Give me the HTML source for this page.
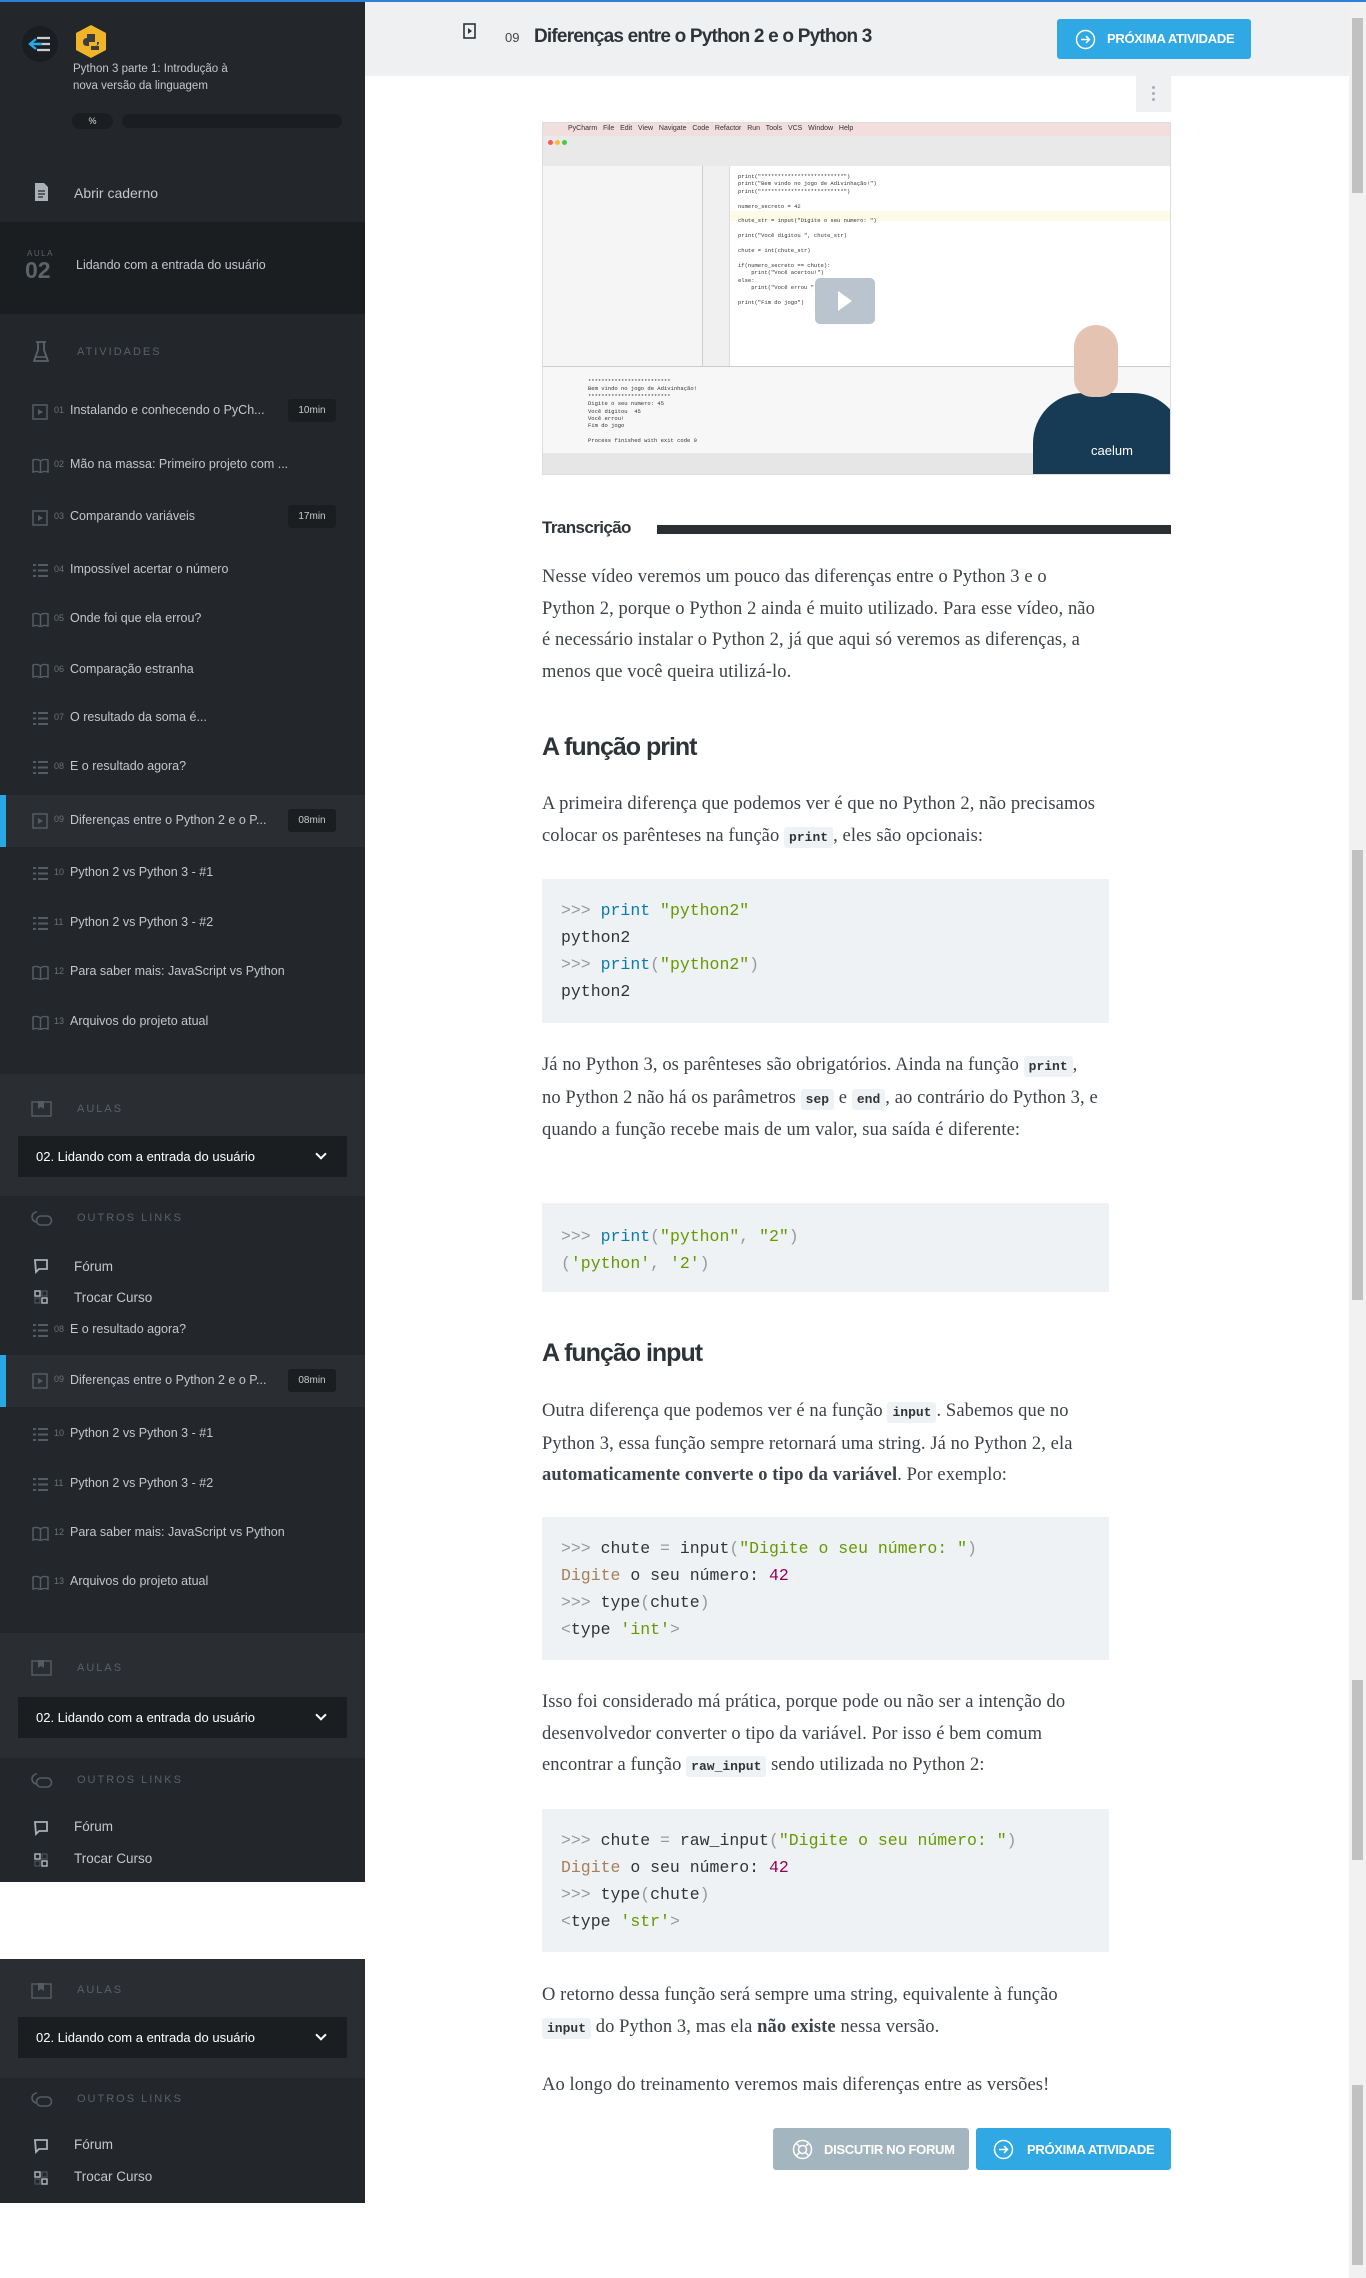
<!DOCTYPE html>
<html><head><meta charset="utf-8">
<style>
*{margin:0;padding:0;box-sizing:border-box}
body{width:1366px;height:2278px;position:relative;background:#fff;font-family:"Liberation Sans",sans-serif;overflow:hidden}
.abs{position:absolute}
#top{left:0;top:0;width:1366px;height:2px;background:#2f7fd8;z-index:5}
.side{position:absolute;left:0;width:365px;background:#23272b;color:#c3c7cb}
.it{position:absolute;left:0;width:365px;height:40px;font-size:12.5px;color:#c3c7cb}
.it .ic{position:absolute;left:32px;top:13px}
.it .n{position:absolute;left:54px;top:14px;font-size:9px;color:#6b7075}
.it .t{position:absolute;left:70px;top:12px;white-space:nowrap}
.it .d{position:absolute;left:288px;top:8px;width:48px;height:23px;background:#1b1e21;border-radius:3px;font-size:10px;color:#c8ccd0;text-align:center;line-height:23px}
.act{background:#2a2e33}
.act:before{content:"";position:absolute;left:0;top:0;width:6px;height:100%;background:#2aa8e6}
.lab{position:absolute;left:77px;font-size:11px;letter-spacing:2px;color:#5a6066}
.sel{position:absolute;left:18px;width:329px;height:41px;background:#1b1e21;color:#fff;font-size:13px;padding:13px 0 0 18px}
.sel:after{content:"";position:absolute;right:22px;top:14px;width:6px;height:6px;border-right:2px solid #fff;border-bottom:2px solid #fff;transform:rotate(45deg)}
.lk{position:absolute;left:74px;font-size:13.5px;color:#c3c7cb}
p.b{position:absolute;left:542px;width:556px;line-height:31.5px;font-size:18.5px;letter-spacing:0.1px;color:#3d4248;font-family:"Liberation Serif",serif}
h2{position:absolute;left:542px;font-family:"Liberation Sans Narrow","Liberation Sans",sans-serif;font-size:25px;font-weight:bold;color:#2e3338;letter-spacing:-1px}
.code{position:absolute;left:542px;width:567px;background:#eff2f5;font-family:"Liberation Mono",monospace;font-size:16.5px;line-height:27px;padding:0 0 0 19px;color:#333;white-space:pre}
.pr{color:#999}.kw{color:#0a7bab}.st{color:#669900}.nu{color:#990055}.dg{color:#a67f59}
code.i{font-family:"Liberation Mono",monospace;font-size:13px;font-weight:bold;background:#eff2f5;padding:3px 5px;border-radius:3px;color:#333;letter-spacing:0}
.btn{position:absolute;color:#fff;font-family:"Liberation Sans Narrow","Liberation Sans",sans-serif;font-weight:bold;font-size:13px;border-radius:3px;letter-spacing:-0.3px}
</style></head><body>
<div id="top" class="abs"></div>

<div class="side" style="top:0;height:1882px">
  <div class="abs" style="left:22px;top:26px;width:36px;height:36px;border-radius:50%;background:#1b1e21"></div>
  <svg class="abs" style="left:28px;top:36px" width="24" height="16" viewBox="0 0 24 16"><path d="M9 2H22M9 8H22M9 14H22" stroke="#c7ccd1" stroke-width="2.2"/><path d="M8 3L2 8L8 13M2 8H14" stroke="#2aa8e6" stroke-width="2.4" fill="none"/></svg>
  <svg class="abs" style="left:74px;top:24px" width="34" height="36" viewBox="0 0 34 36"><polygon points="17,1 32,9 32,26 17,34 2,26 2,9" fill="#f0b429"/><path d="M13 10h8v4h-8zM13 14c-3 0-4 2-4 4s1 4 4 4h2v-4h6v-4zM21 22c3 0 4-2 4-4h-2v4h-6v4h8v-4z" fill="#3d3d3d"/></svg>
  <div class="abs" style="left:73px;top:61px;font-size:11.5px;line-height:17px;color:#c3c7cb">Python 3 parte 1: Introdução à<br>nova versão da linguagem</div>
  <div class="abs" style="left:72px;top:113px;width:41px;height:16px;border-radius:8px;background:#1b1e21;color:#ddd;font-size:9px;text-align:center;line-height:16px">%</div>
  <div class="abs" style="left:122px;top:114px;width:220px;height:14px;border-radius:7px;background:#1b1e21"></div>
  <svg class="abs" style="left:34px;top:182px" width="15" height="20" viewBox="0 0 15 20"><path d="M1 1h9l4 4v14H1z" fill="#aab0b6"/><path d="M4 9h7M4 12h7M4 15h5" stroke="#23272b" stroke-width="1.2"/></svg>
  <div class="abs" style="left:74px;top:185px;font-size:14px;color:#c3c7cb">Abrir caderno</div>
  <div class="abs" style="left:0;top:222px;width:365px;height:92px;background:#1b1e21">
    <div class="abs" style="left:27px;top:27px;font-size:8px;letter-spacing:1.5px;color:#5d6368">AULA</div>
    <div class="abs" style="left:25px;top:35px;font-size:23px;font-weight:bold;color:#5d6368">02</div>
    <div class="abs" style="left:76px;top:36px;font-size:12.5px;color:#c3c7cb">Lidando com a entrada do usuário</div>
  </div>
  <svg class="abs" style="left:33px;top:341px" width="16" height="23" viewBox="0 0 16 23"><path d="M3 1h10M5 1v8L1 20h14L11 9V1" stroke="#5d6368" stroke-width="1.8" fill="none"/><path d="M2.5 16h11" stroke="#5d6368" stroke-width="1.5"/></svg>
  <div class="lab" style="top:346px;font-size:11px">ATIVIDADES</div>

  <div class="it" style="top:391px"><svg class="ic" width="16" height="16"><rect x="1" y="1" width="14" height="14" fill="none" stroke="#555b61" stroke-width="1.5"/><path d="M6 5l5 3-5 3z" fill="#555b61"/></svg><span class="n">01</span><span class="t">Instalando e conhecendo o PyCh...</span><span class="d">10min</span></div>
  <div class="it" style="top:445px"><svg class="ic" width="17" height="15"><path d="M1 2c3-1 5-1 7.5 1c2.5-2 4.5-2 7.5-1v12c-3-1-5-1-7.5 1c-2.5-2-4.5-2-7.5-1z M8.5 3v12" fill="none" stroke="#555b61" stroke-width="1.5"/></svg><span class="n">02</span><span class="t">Mão na massa: Primeiro projeto com ...</span></div>
  <div class="it" style="top:497px"><svg class="ic" width="16" height="16"><rect x="1" y="1" width="14" height="14" fill="none" stroke="#555b61" stroke-width="1.5"/><path d="M6 5l5 3-5 3z" fill="#555b61"/></svg><span class="n">03</span><span class="t">Comparando variáveis</span><span class="d">17min</span></div>
  <div class="it" style="top:550px"><svg class="ic" width="17" height="15"><path d="M1 2h3M6 2h10M1 7.5h3M6 7.5h10M1 13h3M6 13h10" stroke="#555b61" stroke-width="2"/></svg><span class="n">04</span><span class="t">Impossível acertar o número</span></div>
  <div class="it" style="top:599px"><svg class="ic" width="17" height="15"><path d="M1 2c3-1 5-1 7.5 1c2.5-2 4.5-2 7.5-1v12c-3-1-5-1-7.5 1c-2.5-2-4.5-2-7.5-1z M8.5 3v12" fill="none" stroke="#555b61" stroke-width="1.5"/></svg><span class="n">05</span><span class="t">Onde foi que ela errou?</span></div>
  <div class="it" style="top:650px"><svg class="ic" width="17" height="15"><path d="M1 2c3-1 5-1 7.5 1c2.5-2 4.5-2 7.5-1v12c-3-1-5-1-7.5 1c-2.5-2-4.5-2-7.5-1z M8.5 3v12" fill="none" stroke="#555b61" stroke-width="1.5"/></svg><span class="n">06</span><span class="t">Comparação estranha</span></div>
  <div class="it" style="top:698px"><svg class="ic" width="17" height="15"><path d="M1 2h3M6 2h10M1 7.5h3M6 7.5h10M1 13h3M6 13h10" stroke="#555b61" stroke-width="2"/></svg><span class="n">07</span><span class="t">O resultado da soma é...</span></div>
  <div class="it" style="top:747px"><svg class="ic" width="17" height="15"><path d="M1 2h3M6 2h10M1 7.5h3M6 7.5h10M1 13h3M6 13h10" stroke="#555b61" stroke-width="2"/></svg><span class="n">08</span><span class="t">E o resultado agora?</span></div>
  <div class="it act" style="top:795px;height:52px"><svg class="ic" width="16" height="16" style="top:18px"><rect x="1" y="1" width="14" height="14" fill="none" stroke="#555b61" stroke-width="1.5"/><path d="M6 5l5 3-5 3z" fill="#555b61"/></svg><span class="n" style="top:19px">09</span><span class="t" style="top:18px">Diferenças entre o Python 2 e o P...</span><span class="d" style="top:14px">08min</span></div>
  <div class="it" style="top:853px"><svg class="ic" width="17" height="15"><path d="M1 2h3M6 2h10M1 7.5h3M6 7.5h10M1 13h3M6 13h10" stroke="#555b61" stroke-width="2"/></svg><span class="n">10</span><span class="t">Python 2 vs Python 3 - #1</span></div>
  <div class="it" style="top:903px"><svg class="ic" width="17" height="15"><path d="M1 2h3M6 2h10M1 7.5h3M6 7.5h10M1 13h3M6 13h10" stroke="#555b61" stroke-width="2"/></svg><span class="n">11</span><span class="t">Python 2 vs Python 3 - #2</span></div>
  <div class="it" style="top:952px"><svg class="ic" width="17" height="15"><path d="M1 2c3-1 5-1 7.5 1c2.5-2 4.5-2 7.5-1v12c-3-1-5-1-7.5 1c-2.5-2-4.5-2-7.5-1z M8.5 3v12" fill="none" stroke="#555b61" stroke-width="1.5"/></svg><span class="n">12</span><span class="t">Para saber mais: JavaScript vs Python</span></div>
  <div class="it" style="top:1002px"><svg class="ic" width="17" height="15"><path d="M1 2c3-1 5-1 7.5 1c2.5-2 4.5-2 7.5-1v12c-3-1-5-1-7.5 1c-2.5-2-4.5-2-7.5-1z M8.5 3v12" fill="none" stroke="#555b61" stroke-width="1.5"/></svg><span class="n">13</span><span class="t">Arquivos do projeto atual</span></div>

  <div class="abs" style="left:0;top:1074px;width:365px;height:122px;background:#2a2d31"></div>
  <svg class="abs" style="left:31px;top:1100px" width="21" height="18"><rect x="1" y="2" width="19" height="14" fill="none" stroke="#555b61" stroke-width="1.5"/><path d="M7 1v8l3-2 3 2V1" fill="#555b61"/></svg>
  <div class="lab" style="top:1103px">AULAS</div>
  <div class="sel" style="top:1136px">02. Lidando com a entrada do usuário</div>
  <svg class="abs" style="left:31px;top:1209px" width="22" height="20"><path d="M6 3a5 5 0 0 0 0 10M10 7h6a4 4 0 0 1 0 9h-6a4 4 0 0 1 0-9" fill="none" stroke="#555b61" stroke-width="1.6"/></svg>
  <div class="lab" style="top:1212px">OUTROS LINKS</div>
  <svg class="abs" style="left:34px;top:1259px" width="16" height="15"><path d="M1 1h12v9H5l-3 3z" fill="none" stroke="#aab0b6" stroke-width="1.8"/></svg>
  <div class="lk" style="top:1259px">Fórum</div>
  <svg class="abs" style="left:34px;top:1290px" width="14" height="14"><rect x="1" y="1" width="5" height="5" fill="none" stroke="#aab0b6" stroke-width="1.5"/><rect x="8" y="8" width="5" height="5" fill="none" stroke="#aab0b6" stroke-width="1.5"/><rect x="8" y="1" width="5" height="5" fill="none" stroke="#555b61"/><rect x="1" y="8" width="5" height="5" fill="none" stroke="#555b61"/></svg>
  <div class="lk" style="top:1290px">Trocar Curso</div>
  <div class="it" style="top:1310px"><svg class="ic" width="17" height="15"><path d="M1 2h3M6 2h10M1 7.5h3M6 7.5h10M1 13h3M6 13h10" stroke="#555b61" stroke-width="2"/></svg><span class="n">08</span><span class="t">E o resultado agora?</span></div>
  <div class="it act" style="top:1355px;height:52px"><svg class="ic" width="16" height="16" style="top:18px"><rect x="1" y="1" width="14" height="14" fill="none" stroke="#555b61" stroke-width="1.5"/><path d="M6 5l5 3-5 3z" fill="#555b61"/></svg><span class="n" style="top:19px">09</span><span class="t" style="top:18px">Diferenças entre o Python 2 e o P...</span><span class="d" style="top:14px">08min</span></div>
  <div class="it" style="top:1414px"><svg class="ic" width="17" height="15"><path d="M1 2h3M6 2h10M1 7.5h3M6 7.5h10M1 13h3M6 13h10" stroke="#555b61" stroke-width="2"/></svg><span class="n">10</span><span class="t">Python 2 vs Python 3 - #1</span></div>
  <div class="it" style="top:1464px"><svg class="ic" width="17" height="15"><path d="M1 2h3M6 2h10M1 7.5h3M6 7.5h10M1 13h3M6 13h10" stroke="#555b61" stroke-width="2"/></svg><span class="n">11</span><span class="t">Python 2 vs Python 3 - #2</span></div>
  <div class="it" style="top:1513px"><svg class="ic" width="17" height="15"><path d="M1 2c3-1 5-1 7.5 1c2.5-2 4.5-2 7.5-1v12c-3-1-5-1-7.5 1c-2.5-2-4.5-2-7.5-1z M8.5 3v12" fill="none" stroke="#555b61" stroke-width="1.5"/></svg><span class="n">12</span><span class="t">Para saber mais: JavaScript vs Python</span></div>
  <div class="it" style="top:1562px"><svg class="ic" width="17" height="15"><path d="M1 2c3-1 5-1 7.5 1c2.5-2 4.5-2 7.5-1v12c-3-1-5-1-7.5 1c-2.5-2-4.5-2-7.5-1z M8.5 3v12" fill="none" stroke="#555b61" stroke-width="1.5"/></svg><span class="n">13</span><span class="t">Arquivos do projeto atual</span></div>

  <div class="abs" style="left:0;top:1633px;width:365px;height:125px;background:#2a2d31"></div>
  <svg class="abs" style="left:31px;top:1659px" width="21" height="18"><rect x="1" y="2" width="19" height="14" fill="none" stroke="#555b61" stroke-width="1.5"/><path d="M7 1v8l3-2 3 2V1" fill="#555b61"/></svg>
  <div class="lab" style="top:1662px">AULAS</div>
  <div class="sel" style="top:1697px">02. Lidando com a entrada do usuário</div>
  <svg class="abs" style="left:31px;top:1771px" width="22" height="20"><path d="M6 3a5 5 0 0 0 0 10M10 7h6a4 4 0 0 1 0 9h-6a4 4 0 0 1 0-9" fill="none" stroke="#555b61" stroke-width="1.6"/></svg>
  <div class="lab" style="top:1774px">OUTROS LINKS</div>
  <svg class="abs" style="left:34px;top:1821px" width="16" height="15"><path d="M1 1h12v9H5l-3 3z" fill="none" stroke="#aab0b6" stroke-width="1.8"/></svg>
  <div class="lk" style="top:1819px">Fórum</div>
  <svg class="abs" style="left:34px;top:1853px" width="14" height="14"><rect x="1" y="1" width="5" height="5" fill="none" stroke="#aab0b6" stroke-width="1.5"/><rect x="8" y="8" width="5" height="5" fill="none" stroke="#aab0b6" stroke-width="1.5"/><rect x="8" y="1" width="5" height="5" fill="none" stroke="#555b61"/><rect x="1" y="8" width="5" height="5" fill="none" stroke="#555b61"/></svg>
  <div class="lk" style="top:1851px">Trocar Curso</div>
</div>

<div class="side" style="top:1959px;height:244px">
  <div class="abs" style="left:0;top:0;width:365px;height:119px;background:#2a2d31"></div>
  <svg class="abs" style="left:31px;top:23px" width="21" height="18"><rect x="1" y="2" width="19" height="14" fill="none" stroke="#555b61" stroke-width="1.5"/><path d="M7 1v8l3-2 3 2V1" fill="#555b61"/></svg>
  <div class="lab" style="top:25px">AULAS</div>
  <div class="sel" style="top:58px">02. Lidando com a entrada do usuário</div>
  <svg class="abs" style="left:31px;top:131px" width="22" height="20"><path d="M6 3a5 5 0 0 0 0 10M10 7h6a4 4 0 0 1 0 9h-6a4 4 0 0 1 0-9" fill="none" stroke="#555b61" stroke-width="1.6"/></svg>
  <div class="lab" style="top:134px">OUTROS LINKS</div>
  <svg class="abs" style="left:34px;top:180px" width="16" height="15"><path d="M1 1h12v9H5l-3 3z" fill="none" stroke="#aab0b6" stroke-width="1.8"/></svg>
  <div class="lk" style="top:178px">Fórum</div>
  <svg class="abs" style="left:34px;top:212px" width="14" height="14"><rect x="1" y="1" width="5" height="5" fill="none" stroke="#aab0b6" stroke-width="1.5"/><rect x="8" y="8" width="5" height="5" fill="none" stroke="#aab0b6" stroke-width="1.5"/><rect x="8" y="1" width="5" height="5" fill="none" stroke="#555b61"/><rect x="1" y="8" width="5" height="5" fill="none" stroke="#555b61"/></svg>
  <div class="lk" style="top:210px">Trocar Curso</div>
</div>

<div class="abs" style="left:1349px;top:0;width:17px;height:2278px;background:#f1f1f1"></div>
<div class="abs" style="left:1352px;top:18px;width:11px;height:175px;background:#c1c1c1"></div>
<div class="abs" style="left:1352px;top:850px;width:11px;height:450px;background:#c1c1c1"></div>
<div class="abs" style="left:1352px;top:1680px;width:11px;height:180px;background:#c1c1c1"></div>
<div class="abs" style="left:1352px;top:2085px;width:11px;height:180px;background:#c1c1c1"></div>

<div class="abs" style="left:365px;top:2px;width:984px;height:74px;background:#eef0f2"></div>
<svg class="abs" style="left:463px;top:23px" width="13" height="16"><rect x="1" y="1" width="11" height="14" fill="none" stroke="#2e3338" stroke-width="1.6"/><path d="M5 5l4 3-4 3z" fill="#2e3338"/></svg>
<div class="abs" style="left:505px;top:30px;font-size:13px;color:#444">09</div>
<div class="abs" style="left:534px;top:26px;font-size:19px;font-weight:bold;color:#2e3338;letter-spacing:-0.8px">Diferenças entre o Python 2 e o Python 3</div>
<div class="btn" style="left:1057px;top:19px;width:194px;height:40px;background:#30a8e3">
  <svg class="abs" style="left:18px;top:10px" width="21" height="21"><circle cx="10.5" cy="10.5" r="9" fill="none" stroke="#fff" stroke-width="1.5"/><path d="M6 10.5h8M11 7l3.5 3.5L11 14" fill="none" stroke="#fff" stroke-width="1.5"/></svg>
  <span class="abs" style="left:50px;top:12px;font-size:13px">PRÓXIMA ATIVIDADE</span>
</div>
<div class="abs" style="left:1136px;top:76px;width:35px;height:36px;background:#eef0f2"></div>
<div class="abs" style="left:1152px;top:86px;width:3px;height:3px;background:#aab;border-radius:50%;box-shadow:0 6px 0 #aab,0 12px 0 #aab"></div>

<div class="abs" style="left:542px;top:122px;width:629px;height:353px;background:#fff;overflow:hidden;border:1px solid #ddd">
  <div class="abs" style="left:0;top:0;width:629px;height:13px;background:#f3dede;font-size:7px;color:#333;padding:2px 0 0 25px">PyCharm &nbsp; File &nbsp; Edit &nbsp; View &nbsp; Navigate &nbsp; Code &nbsp; Refactor &nbsp; Run &nbsp; Tools &nbsp; VCS &nbsp; Window &nbsp; Help</div>
  <div class="abs" style="left:0;top:13px;width:629px;height:30px;background:#e9e9e9"></div>
  <div class="abs" style="left:5px;top:17px;width:5px;height:5px;border-radius:50%;background:#f55;box-shadow:7px 0 #fb3,14px 0 #4c4"></div>
  <div class="abs" style="left:0;top:43px;width:160px;height:200px;background:#f5f5f5;border-right:1px solid #ccc"></div>
  <div class="abs" style="left:160px;top:43px;width:27px;height:200px;background:#f0f0f0;border-right:1px solid #ddd"></div>
  <div class="abs" style="left:187px;top:88px;width:440px;height:10px;background:#fdfbe8"></div>
  <div class="abs" style="left:195px;top:50px;font-family:'Liberation Mono',monospace;font-size:5.5px;line-height:7.4px;color:#333;white-space:pre">print("*************************")
print("Bem vindo no jogo de Adivinhação!")
print("*************************")

numero_secreto = 42

chute_str = input("Digite o seu numero: ")

print("Você digitou ", chute_str)

chute = int(chute_str)

if(numero_secreto == chute):
    print("Você acertou!")
else:
    print("Você errou ")

print("Fim do jogo")</div>
  <div class="abs" style="left:0;top:243px;width:629px;height:110px;background:#f7f7f7;border-top:1px solid #ccc"></div>
  <div class="abs" style="left:45px;top:255px;font-family:'Liberation Mono',monospace;font-size:5.5px;line-height:7.4px;color:#333;white-space:pre">*************************
Bem vindo no jogo de Adivinhação!
*************************
Digite o seu numero: 45
Você digitou  45
Você errou!
Fim do jogo

Process finished with exit code 0</div>
  <div class="abs" style="left:0;top:330px;width:629px;height:23px;background:#e6e6e6"></div>
  <div class="abs" style="left:272px;top:155px;width:60px;height:46px;background:#b5c1cc;border-radius:5px;opacity:.95"></div>
  <div class="abs" style="left:295px;top:168px;width:0;height:0;border-left:14px solid #fff;border-top:10px solid transparent;border-bottom:10px solid transparent"></div>
  <div class="abs" style="left:490px;top:270px;width:150px;height:90px;background:#173a55;border-radius:50px 50px 0 0"></div>
  <div class="abs" style="left:531px;top:202px;width:44px;height:72px;background:#e5c3b2;border-radius:22px 22px 18px 18px"></div>
  <div class="abs" style="left:548px;top:320px;font-size:13px;color:#fff">caelum</div>
</div>

<div class="abs" style="left:542px;top:518px;font-weight:bold;font-size:17px;color:#2e3338;letter-spacing:-0.6px">Transcrição</div>
<div class="abs" style="left:657px;top:525px;width:514px;height:9px;background:#2b2f33"></div>

<p class="b" style="top:562px">Nesse vídeo veremos um pouco das diferenças entre o Python 3 e o Python 2, porque o Python 2 ainda é muito utilizado. Para esse vídeo, não é necessário instalar o Python 2, já que aqui só veremos as diferenças, a menos que você queira utilizá-lo.</p>
<h2 style="top:733px">A função print</h2>
<p class="b" style="top:789px">A primeira diferença que podemos ver é que no Python 2, não precisamos colocar os parênteses na função <code class="i">print</code>, eles são opcionais:</p>
<div class="code" style="top:879px;height:144px;padding-top:18px"><span class="pr">&gt;&gt;&gt;</span> <span class="kw">print</span> <span class="st">"python2"</span>
python2
<span class="pr">&gt;&gt;&gt;</span> <span class="kw">print</span><span class="pr">(</span><span class="st">"python2"</span><span class="pr">)</span>
python2</div>
<p class="b" style="top:1050px">Já no Python 3, os parênteses são obrigatórios. Ainda na função <code class="i">print</code>, no Python 2 não há os parâmetros <code class="i">sep</code> e <code class="i">end</code>, ao contrário do Python 3, e quando a função recebe mais de um valor, sua saída é diferente:</p>
<div class="code" style="top:1203px;height:89px;padding-top:20px"><span class="pr">&gt;&gt;&gt;</span> <span class="kw">print</span><span class="pr">(</span><span class="st">"python"</span><span class="pr">,</span> <span class="st">"2"</span><span class="pr">)</span>
<span class="pr">(</span><span class="st">'python'</span><span class="pr">,</span> <span class="st">'2'</span><span class="pr">)</span></div>
<h2 style="top:1339px">A função input</h2>
<p class="b" style="top:1396px">Outra diferença que podemos ver é na função <code class="i">input</code>. Sabemos que no Python 3, essa função sempre retornará uma string. Já no Python 2, ela <b>automaticamente converte o tipo da variável</b>. Por exemplo:</p>
<div class="code" style="top:1517px;height:143px;padding-top:18px"><span class="pr">&gt;&gt;&gt;</span> chute <span class="pr">=</span> input<span class="pr">(</span><span class="st">"Digite o seu número: "</span><span class="pr">)</span>
<span class="dg">Digite</span> o seu número: <span class="nu">42</span>
<span class="pr">&gt;&gt;&gt;</span> type<span class="pr">(</span>chute<span class="pr">)</span>
<span class="pr">&lt;</span>type <span class="st">'int'</span><span class="pr">&gt;</span></div>
<p class="b" style="top:1687px">Isso foi considerado má prática, porque pode ou não ser a intenção do desenvolvedor converter o tipo da variável. Por isso é bem comum encontrar a função <code class="i">raw_input</code> sendo utilizada no Python 2:</p>
<div class="code" style="top:1809px;height:143px;padding-top:18px"><span class="pr">&gt;&gt;&gt;</span> chute <span class="pr">=</span> raw_input<span class="pr">(</span><span class="st">"Digite o seu número: "</span><span class="pr">)</span>
<span class="dg">Digite</span> o seu número: <span class="nu">42</span>
<span class="pr">&gt;&gt;&gt;</span> type<span class="pr">(</span>chute<span class="pr">)</span>
<span class="pr">&lt;</span>type <span class="st">'str'</span><span class="pr">&gt;</span></div>
<p class="b" style="top:1980px">O retorno dessa função será sempre uma string, equivalente à função <code class="i">input</code> do Python 3, mas ela <b>não existe</b> nessa versão.</p>
<p class="b" style="top:2070px">Ao longo do treinamento veremos mais diferenças entre as versões!</p>

<div class="btn" style="left:773px;top:2128px;width:196px;height:42px;background:#a3b6bf">
  <svg class="abs" style="left:19px;top:11px" width="21" height="21"><circle cx="10.5" cy="10.5" r="9" fill="none" stroke="#fff" stroke-width="1.5"/><circle cx="10.5" cy="10.5" r="4" fill="none" stroke="#fff" stroke-width="1.5"/><path d="M4 4l4 4M17 4l-4 4M4 17l4-4M17 17l-4-4" stroke="#fff" stroke-width="1.5"/></svg>
  <span class="abs" style="left:51px;top:14px">DISCUTIR NO FORUM</span>
</div>
<div class="btn" style="left:976px;top:2128px;width:195px;height:42px;background:#30a8e3">
  <svg class="abs" style="left:17px;top:11px" width="21" height="21"><circle cx="10.5" cy="10.5" r="9" fill="none" stroke="#fff" stroke-width="1.5"/><path d="M6 10.5h8M11 7l3.5 3.5L11 14" fill="none" stroke="#fff" stroke-width="1.5"/></svg>
  <span class="abs" style="left:51px;top:14px">PRÓXIMA ATIVIDADE</span>
</div>
</body></html>
